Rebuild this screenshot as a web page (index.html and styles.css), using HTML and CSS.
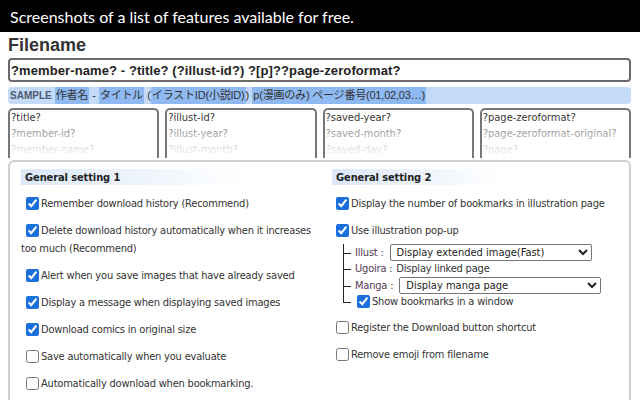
FILE: index.html
```html
<!DOCTYPE html>
<html lang="en">
<head>
<meta charset="utf-8">
<title>Filename settings</title>
<link rel="stylesheet" href="styles.css">
</head>
<body>
<div class="topbar">Screenshots of a list of features available for free.</div>
<main class="page">
  <h1 class="title">Filename</h1>
  <input class="name-input" type="text" readonly value="?member-name? - ?title? (?illust-id?) ?[p]??page-zeroformat?">
  <div class="sample"><span class="sample-label">SAMPLE</span> <span class="tok">作者名</span> - <span class="tok">タイトル</span> (<span class="tok">イラストID(小説ID)</span>) <span class="tok">p(漫画のみ) ページ番号(01,02,03…)</span></div>
  <div class="tokens">
    <div class="token-list"><div class="first">?title?</div><div>?member-id?</div><div>?member-name?</div></div>
    <div class="token-list"><div class="first">?illust-id?</div><div>?illust-year?</div><div>?illust-month?</div></div>
    <div class="token-list"><div class="first">?saved-year?</div><div>?saved-month?</div><div>?saved-day?</div></div>
    <div class="token-list"><div class="first">?page-zeroformat?</div><div>?page-zeroformat-original?</div><div>?page?</div></div>
  </div>
  <section class="panel">
    <div class="col">
      <h2 class="sec-head">General setting 1</h2>
      <label class="opt"><input type="checkbox" checked>Remember download history (Recommend)</label>
      <label class="opt"><input type="checkbox" checked>Delete download history automatically when it increases too much (Recommend)</label>
      <label class="opt"><input type="checkbox" checked>Alert when you save images that have already saved</label>
      <label class="opt"><input type="checkbox" checked>Display a message when displaying saved images</label>
      <label class="opt"><input type="checkbox" checked>Download comics in original size</label>
      <label class="opt"><input type="checkbox">Save automatically when you evaluate</label>
      <label class="opt"><input type="checkbox">Automatically download when bookmarking.</label>
    </div>
    <div class="col col2">
      <h2 class="sec-head">General setting 2</h2>
      <label class="opt"><input type="checkbox" checked>Display the number of bookmarks in illustration page</label>
      <div class="opt-group">
        <label class="opt opt-tight"><input type="checkbox" checked>Use illustration pop-up</label>
        <ul class="tree">
          <li class="row-sel"><span class="lbl">Illust :</span><select class="sel"><option>Display extended image(Fast)</option></select></li>
          <li class="row-text"><span class="lbl lbl-text">Ugoira :</span>Display linked page</li>
          <li class="row-sel"><span class="lbl">Manga :</span><select class="sel"><option>Display manga page</option></select></li>
          <li class="row-last"><label class="sub"><input type="checkbox" checked>Show bookmarks in a window</label></li>
        </ul>
      </div>
      <label class="opt"><input type="checkbox">Register the Download button shortcut</label>
      <label class="opt"><input type="checkbox">Remove emoji from filename</label>
    </div>
  </section>
</main>
</body>
</html>
```
FILE: styles.css
```css
html, body {
  margin: 0;
  background: #fff;
}
body {
  font-family: "Liberation Sans", Arial, "Noto Sans CJK JP", sans-serif;
  color: #333;
  overflow: hidden;
  height: 400px;
}
.topbar {
  background: #000;
  color: #fff;
  height: 32px;
  line-height: 33px;
  padding-left: 10px;
  font-family: "Lato", "Liberation Sans", sans-serif;
  font-size: 16px;
  white-space: nowrap;
}
.page {
  padding: 0 9px 0 8px;
}
.title {
  margin: 0;
  padding-top: 1px;
  font-size: 18px;
  line-height: 24px;
  font-weight: bold;
  color: #333;
}
.name-input {
  display: block;
  box-sizing: border-box;
  width: 100%;
  height: 24px;
  margin: 1px 0 0;
  padding: 0 1px;
  border: 2px solid #6b6b6b;
  border-radius: 4px;
  font-family: "Liberation Sans", Arial, sans-serif;
  font-weight: bold;
  font-size: 13px;
  letter-spacing: 0.1px;
  color: #222;
  outline: none;
}
.sample {
  margin-top: 5px;
  height: 17px;
  line-height: 17px;
  background: #c3daf8;
  border-radius: 4px;
  padding-left: 2px;
  font-family: "Liberation Sans", "Noto Sans CJK JP", sans-serif;
  font-size: 11px;
  color: #333;
  white-space: pre;
  overflow: hidden;
}
.sample-label {
  font-size: 10px;
  font-weight: bold;
  color: #4d5b6e;
}
.tok {
  display: inline-block;
  height: 17px;
  vertical-align: top;
  background: #8fb9f1;
  padding: 0 1px;
  letter-spacing: -0.2px;
}
.tokens {
  display: grid;
  grid-template-columns: repeat(4, 1fr);
  gap: 6px;
  margin-top: 4px;
}
.token-list {
  position: relative;
  height: 48px;
  overflow: hidden;
  border: 2px solid #777;
  border-bottom: none;
  border-radius: 5px 5px 0 0;
  padding-left: 1px;
  font-family: "DejaVu Sans Condensed", "Liberation Sans", Arial, sans-serif;
  font-size: 11px;
  line-height: 16px;
  color: #5a5a5a;
}
.token-list .first {
  color: #333;
}
.token-list::after {
  content: "";
  position: absolute;
  left: -2px;
  right: -2px;
  top: 0;
  bottom: 0;
  background: linear-gradient(to bottom, rgba(255,255,255,0) 18%, rgba(255,255,255,0.45) 50%, rgba(255,255,255,0.8) 80%, #fff 100%);
}
.panel {
  display: grid;
  grid-template-columns: 300px 1fr;
  column-gap: 11px;
  margin-top: 2px;
  height: 260px;
  padding: 7px 10px 0 11px;
  border: 2px solid #cfcfcf;
  border-bottom: none;
  border-radius: 6px 6px 0 0;
  font-family: "DejaVu Sans Condensed", "Liberation Sans", Arial, sans-serif;
  font-size: 11px;
  letter-spacing: -0.2px;
  line-height: 18px;
}
.col {
  display: flex;
  flex-direction: column;
  align-items: flex-start;
}
.sec-head {
  align-self: stretch;
  margin: 0 0 10px;
  padding-left: 4px;
  height: 16px;
  line-height: 17px;
  font-size: 11px;
  letter-spacing: -0.1px;
  font-weight: bold;
  color: #222;
  background: linear-gradient(to right, #dce8f9 0%, #eef4fc 40%, #fff 75%);
}
.col2 .sec-head {
  margin-right: 60px;
}
.opt {
  display: block;
  margin-bottom: 9px;
  color: #333;
}
.opt input, .sub input {
  width: 13px;
  height: 13px;
  margin: 0 2px 0 5px;
  vertical-align: -3px;
  accent-color: #1a6fdc;
}
.col2 .opt input {
  margin-left: 4px;
}
.opt-group {
  margin-bottom: 10px;
}
.opt-tight {
  margin-bottom: 4px;
}
.tree {
  list-style: none;
  margin: 0 0 0 11px;
  padding: 0;
}
.tree li {
  position: relative;
  padding-left: 12px;
  line-height: 16px;
  display: flex;
  align-items: center;
  white-space: pre;
}
.tree .row-sel {
  height: 17px;
}
.tree .row-text {
  height: 16px;
}
.tree .row-last {
  height: 15px;
}
.tree li::before {
  content: "";
  position: absolute;
  left: 0;
  top: 0;
  width: 7px;
  height: 50%;
  border-left: 1px solid #222;
  border-bottom: 1px solid #222;
}
.tree li::after {
  content: "";
  position: absolute;
  left: 0;
  top: 50%;
  bottom: 0;
  border-left: 1px solid #222;
}
.tree li:last-child::after {
  display: none;
}
.tree li:last-child .sub input {
  margin-left: 2px;
}
.lbl {
  color: #553a55;
  margin-right: 6px;
}
.lbl-text {
  margin-right: 4px;
}
.sel {
  width: 202px;
  height: 17px;
  padding: 0 2px;
  font-family: "DejaVu Sans Condensed", "Liberation Sans", Arial, sans-serif;
  font-size: 11px;
  color: #222;
  border: 1px solid #767676;
  border-radius: 2px;
  background: #fff;
}
```
